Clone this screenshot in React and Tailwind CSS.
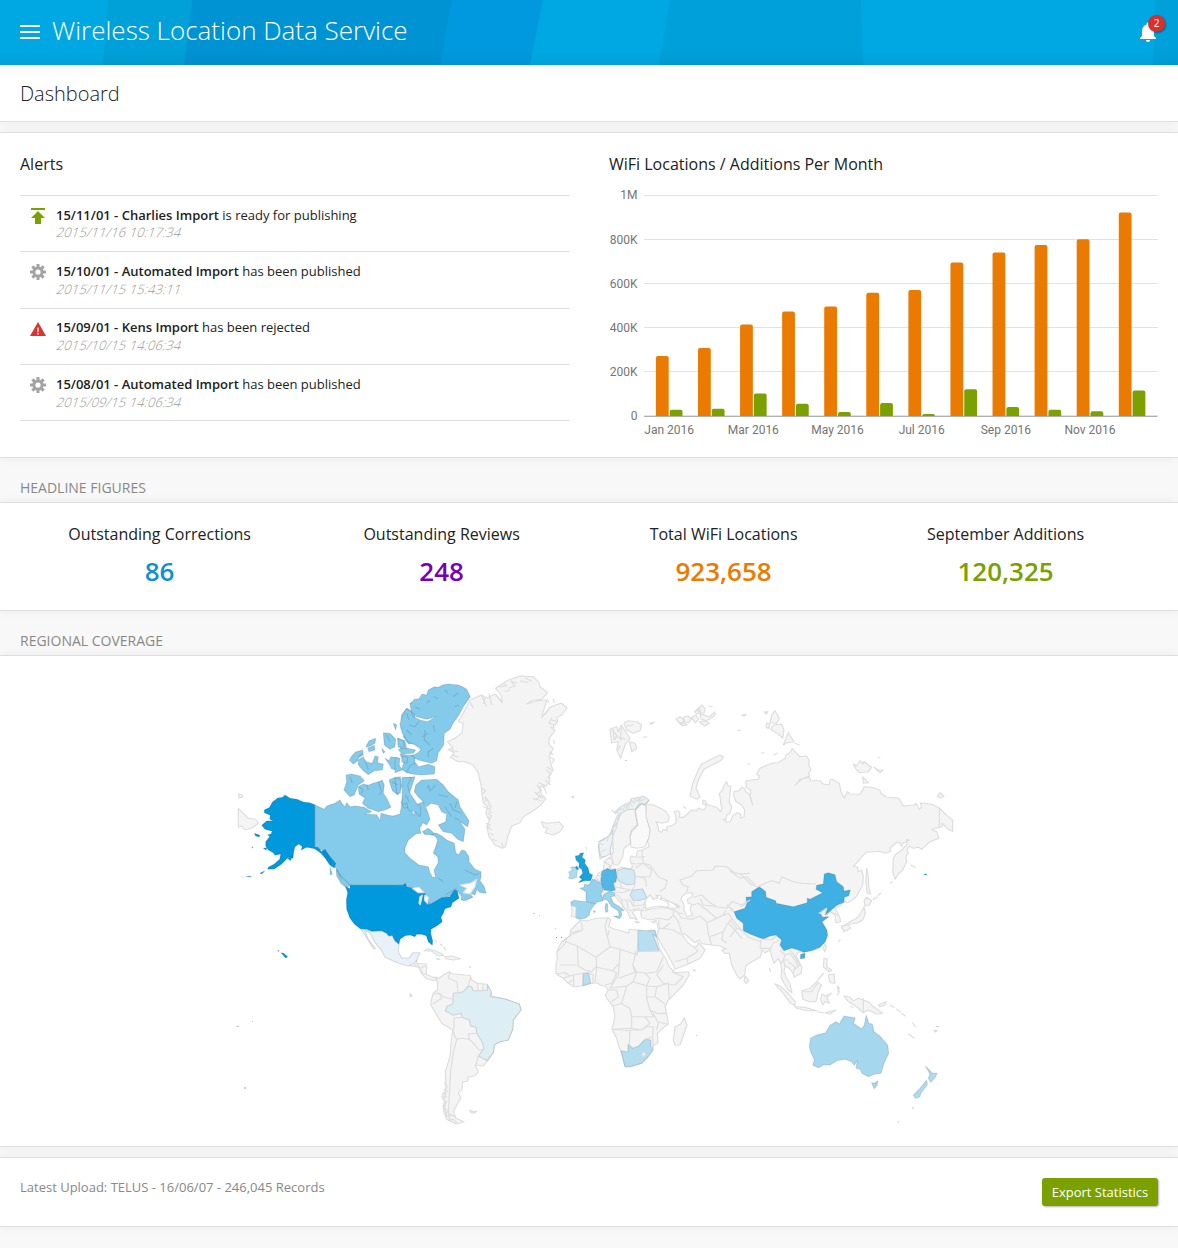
import React from "react";

/* ---------- Regional coverage map ---------- */

// Tiles of the map grid; outlines are stored in thirds of a pixel from a tile's corner.
const A = [235, 670];
const B = [395, 670];
const C = [550, 670];
const D = [740, 690];
const E = [550, 850];
const F = [730, 860];
const G = [400, 930];

function points(tile, text) {
  return text.trim().split(/\s+/).map((p) => {
    const [x, y] = p.split(",").map(Number);
    return (tile[0] + x / 3).toFixed(1) + "," + (tile[1] + y / 3).toFixed(1);
  });
}
function outline(...parts) {
  let all = [];
  for (let i = 0; i < parts.length; i += 2) all = all.concat(points(parts[i], parts[i + 1]));
  return "M" + all.join("L") + "Z";
}
// several outlines in one tile, split by "|"
function many(tile, text) {
  return text.split("|").map((t) => outline(tile, t)).join("");
}
function lines(tile, text) {
  return text.split("|").map((t) => "M" + points(tile, t).join("L")).join("");
}

const LAND = "#f4f4f4";

const shapes = [
  // Eurasia
  [LAND, outline(
    C, "288,402 310,405 335,416 348,425 358,440 355,455 335,460 318,455 325,470 325,482 335,487 340,478 352,482 350,470 368,466 378,458 378,440 372,425 385,422 390,430 388,442 400,442 412,432 425,420 440,421 445,414 462,420 470,408 458,400 458,390 466,393 470,402 485,408 500,412 512,425 516,415 512,400 510,380 508,370 518,360 522,345 530,335 534,348 543,348 540,370 538,395 545,412 540,428 530,436 528,448 520,448 530,457 540,455 550,435 562,428 572,432 572,445 582,440 584,420 575,405 558,395 552,380 552,365 568,362 575,352 582,355 588,365 600,375",
    D, "38,345 30,320 32,300 18,292 18,272 55,268 58,258 50,252 60,235 75,228 95,220 115,218 135,205 138,195 148,190 157,176 170,190 180,200 200,198 208,212 206,225 213,240 205,250 210,258 190,265 170,280 165,286 180,268 208,262 212,272 240,272 250,282 268,285 270,270 276,268 298,280 303,305 313,325 322,305 330,312 360,313 368,300 372,290 395,292 420,300 422,310 440,322 475,324 483,335 490,348 522,345 528,340 538,358 545,350 541,339 575,343 598,354 630,385 638,390 638,424 625,418 615,408 606,400 606,410 575,418 590,425 597,445 570,455 545,478 535,472 520,475 508,468 502,478 505,490 497,500 500,515 488,540 475,552 465,568 458,545 460,505 468,492 485,480 500,465 500,448 508,450 485,462 486,470 478,457 470,457 450,475 452,484 435,490 420,484 378,487 340,530 352,530 355,545 365,540 370,560 368,585 350,618 335,632 322,638 312,634 300,648 285,655 290,662 300,685 302,695 288,698 285,675 276,668",
    F, "300,155 277,185 290,210 280,250 222,277 205,275 198,288 215,320 214,340 192,352 190,340 178,325 165,318 162,335 168,350 180,372 186,398 175,390 162,370 153,352 155,330 152,310 145,295 132,310 125,290 120,270 105,278 95,270 92,290 65,305 47,318 44,345 30,357 20,345 5,315",
    E, "540,320 538,310 525,310 515,300 528,296 510,288 485,285 455,281 448,270 435,278 425,270 408,255 400,250 398,258 408,272 425,288 440,290 445,278 465,300 460,310 450,325 420,340 375,358 370,345 350,310 330,275 320,255 328,235 326,215 328,205 300,210 275,203 272,190 275,182 300,178 340,172 372,175 390,170 340,145 290,150 285,170 272,182 255,180 248,188 262,210 250,205 240,205 235,190 228,180 213,160 200,145 190,130 160,145 128,100",
    C, "128,632 138,625 145,610 160,602 163,575 178,562 190,572 180,596 200,598 215,592 240,597 248,590 240,570 243,558 258,562 262,543 275,540 298,530 290,505 300,480 285,440")],
  [LAND, outline(C, "150,568 145,530 150,512 178,498 190,470 205,440 230,408 270,385 297,392 285,405 275,402 265,408 255,425 262,465 245,480 240,500 242,520 222,535 218,560 205,585 192,585 185,562 180,548")],
  ["#f9f9f9", outline(C, "243,532 240,500 245,485 264,465 256,425 258,418 275,402 288,408 288,440 300,480 296,505 285,530 262,535")],
  ["#eaf3f6", outline(C, "152,560 148,540 146,515 160,510 185,490 188,470 205,430 195,425 215,408 240,395 245,385 270,382 280,378 297,390 285,402 270,400 255,418 235,418 212,430 200,462 188,475 188,510 180,540 182,550 165,560")],
  // Africa
  [LAND, outline(E, "92,210 110,212 140,205 175,203 182,210 176,230 195,238 215,242 235,250 238,238 262,240 290,245 300,240 315,242 330,300 345,322 358,350 375,368 415,365 418,375 400,405 375,430 355,450 345,470 350,490 355,522 338,535 322,550 324,578 308,588 308,600 290,625 275,640 240,650 225,650 213,605 205,585 200,565 186,538 195,500 190,470 170,445 166,435 175,420 165,408 150,405 140,398 118,402 98,408 72,410 55,400 40,385 18,372 18,345 22,325 20,305 35,275 60,258 62,240")],
  [LAND, many(E, "403,503 411,525 404,545 390,585 375,586 370,570 375,530 392,522|254,214 270,217 262,219|305,215 320,210 312,219|430,359 436,361 432,363")],
  // South and Central America
  [LAND, outline(G, "118,145 130,135 148,125 158,132 165,132 195,135 210,136 215,150 232,160 262,163 272,185 275,198 305,205 330,212 358,222 363,240 340,270 338,298 325,330 300,335 283,345 280,368 262,392 250,408 226,405 235,425 225,438 205,440 203,454 188,455 186,478 175,488 182,505 170,525 160,545 168,565 192,575 168,582 140,568 130,540 136,520 126,500 138,475 136,425 150,380 154,330 158,300 125,280 105,245 92,225 95,205 100,190 112,180 113,160 108,145")],
  [LAND, many(G, "38,92 50,90 50,100 78,102 80,112 78,132 98,142 112,142 104,152 82,148 66,132 56,112 32,108 30,100|72,62 85,56 105,62 125,72 132,78 112,76 96,64|135,80 155,78 182,86 160,90 138,86|110,86 120,88 112,89|210,540 218,545 230,544 222,550 212,548|30,190 36,198 31,200|208,110 212,110 210,113|105,30 110,36|120,42 126,46|132,52 138,60")],
  ["#deeef5", outline(G, "262,165 275,185 270,200 305,205 330,212 358,222 363,240 340,270 338,298 325,330 300,335 283,345 280,368 262,392 248,385 235,378 252,355 246,335 230,310 228,292 212,288 208,270 185,262 184,250 160,256 136,242 142,228 158,222 160,190 175,188 190,185 205,168 215,170 220,182 245,182 262,180")],
  ["#e9f2f8", outline(A, "376,776 410,784 440,782 455,790 462,798 472,796 480,812 492,822 490,845 500,864 522,864 533,848 555,848 548,865 540,878 520,888 490,880 450,862 440,842 420,818 405,788 390,782 400,808 422,836 415,836 396,805 380,782")],
  // North Atlantic
  [LAND, outline(B, "157,215 180,205 200,190 205,160 190,155 205,130 225,90 260,75 275,85 300,72 322,98 318,75 302,55 340,30 375,18 415,20 432,38 435,50 458,68 440,88 410,92 395,102 430,92 455,90 440,142 465,112 490,102 500,100 516,114 500,135 486,142 488,155 470,175 480,182 462,205 462,225 475,235 462,260 470,290 475,300 462,318 465,335 450,350 432,350 440,375 452,385 438,405 410,425 385,440 375,458 350,468 344,485 338,500 332,530 322,535 300,525 282,500 275,470 285,450 272,430 278,410 265,400 262,380 258,345 250,310 235,285 210,275 190,275 165,262 178,250 160,238 175,235")],
  [LAND, many(B, "440,455 455,460 475,458 492,455 505,470 495,485 475,495 450,488 458,475 445,472")],
  // Arctic archipelagos
  [LAND, many(C, "180,178 200,170 205,185 214,165 230,190 240,205 225,225 212,265 200,240 205,215 185,218 182,195|222,160 235,152 262,155 275,165 270,182 250,190 230,180|238,215 255,220 260,235 245,245|420,378 428,340 445,300 455,282 490,265 510,255 520,260 515,270 480,288 462,298 445,330 438,355 450,380 440,388|378,148 390,140 402,150 395,162 385,155|400,142 414,138 424,148 416,158 404,156|388,160 400,158 412,165 398,168|424,142 438,135 446,148 436,158|434,124 448,116 452,128 440,132|440,120 455,105 465,115 462,130 452,128|450,132 464,136 478,140 494,126 496,134 482,146 466,152 452,146|448,156 466,152 478,160 464,168|300,160 312,156 304,163|280,202 290,200|576,136 588,133 582,138|562,180 572,182|65,380 72,379|400,410 408,415|476,108 486,110")],
  [LAND, many(D, "95,75 105,62 118,85 110,100 90,98|92,118 100,105 125,102 132,120 128,145 115,132|130,165 145,128 162,155 140,158|72,65 84,65 78,72|80,98 90,102 86,116 78,110|6,75 18,74|165,160 178,165|340,222 350,228 360,212 370,222 372,215 395,232 385,245 360,248 348,238|402,232 415,240 430,240 420,248|368,260 385,278 370,280|592,318 600,308 612,318 600,324|415,203 420,202|65,190 72,188|102,195 112,190|22,222 30,222|380,535 385,560 386,590 392,612 382,610 377,575|512,525 525,532|400,628 412,620|415,616 422,610|452,580 456,576")],
  [LAND, many(D, "380,622 395,632 388,645 375,648 372,632|372,650 376,670 368,690 350,700 330,702 308,718 305,710 330,695 350,685 362,670")],
  [LAND, many(A, "10,415 40,445 62,448 70,460 50,475 30,480 20,468 10,472|10,372 20,374 24,380 12,384")],
  // East Asian and Pacific islands
  [LAND, many(F, "285,252 290,262 284,275 280,265|282,295 292,297 290,320 305,330 298,335 280,320|295,345 312,342 315,370 300,368|262,362 280,340|135,372 150,378 175,400 195,425 195,437 180,428 160,400|195,440 225,442 260,452 230,452 200,445|215,392 240,385 260,365 275,375 265,395 258,425 240,425 218,418|275,402 285,408 305,400 290,412 298,430 285,425 278,435 272,420|262,455 280,458|285,458 318,450 300,462|322,378 328,384 325,396|342,408 360,412 370,422 385,415 415,425 430,440 458,460 440,462 415,450 400,458 380,440 355,425|445,435 468,425 465,435 450,440|480,435 492,442|500,448 512,455|515,460 526,468|536,522 552,534|612,510 622,512 615,516|548,488 556,500|45,348 56,362 48,370 42,362|118,325 122,335|335,198 355,195 362,205 342,215|322,405 328,395|360,440 370,442|325,245 330,240")],
  // Canada
  ["#84cbeb", outline(
    A, "239,404 268,418 275,408 300,400 315,390 322,402 330,410 335,398 345,410 362,408 388,412 410,425 390,432 425,434 435,452 438,430 460,436 475,438 495,432 500,405 520,400",
    B, "48,405 50,424 58,436 62,405 85,395 98,425 105,448 95,465 84,458 74,475 78,490 62,492 40,510 30,535 30,548 45,565 72,585 100,590 105,608 112,622 122,622 117,600 130,578 128,560 115,550 122,530 128,510 120,498 100,492 125,490 140,498 155,510 178,520 182,548 190,555 200,540 210,542 222,560 222,575 240,598 258,605 258,622 255,632 268,650 273,670 255,668 246,658 240,675 222,668 234,682 210,692 198,690 200,680 186,660 165,678 140,684 103,704 98,688 90,672 55,654 28,645 0,646",
    A, "345,646 325,632 312,612 300,590 284,560 262,540 239,536")],
  ["#84cbeb", many(A, "333,315 350,312 375,318 388,332 370,345 358,375 345,380 327,360 335,335|370,350 385,342 400,346 415,340 430,335 442,330 448,345 445,370 455,385 468,412 450,420 430,425 400,415 382,400 390,385 372,372|343,270 350,258 362,246 383,240 385,255 372,262 368,272 355,282|392,232 402,212 422,205 420,220 405,228|398,234 418,226 420,240 402,245|370,270 385,260 392,275 412,280 420,258 430,260 428,278 445,282 442,300 418,302 400,314 385,302 370,285|445,188 465,190 482,208 480,230 465,238 448,225|488,205 510,212 516,240 502,245 490,225|450,265 462,272 468,260 490,264 494,302 470,297 462,282|475,160 485,165 482,180|462,330 480,322 496,320 500,350 488,375 472,362|503,325 540,320 530,350 520,380 525,410 508,415 498,400 505,375|495,252 520,256 540,255 540,310 515,308 500,298 506,278|515,115 540,130 540,220 520,222 505,200 512,180 498,160 500,135|525,100 540,92 540,130|440,235 450,245 445,250|285,592 292,612 286,615|304,598 322,622 345,645 335,655 318,640 305,618")],
  ["#84cbeb", many(B, "45,105 58,88 72,86 82,72 95,75 100,60 118,50 130,52 145,44 160,42 190,45 205,52 215,58 226,80 205,110 190,138 175,158 165,178 148,190 146,225 130,248 125,272 110,280 70,270 50,258 70,248 78,238 60,225 40,215 22,190 15,165 22,135 35,115 48,125 55,140 75,150 98,155 122,140 95,148 65,140 50,125|8,205 25,212 28,230 10,232|10,238 38,235 62,240 55,250 20,252|0,262 15,265 12,285 22,300 0,308|22,258 38,262 36,280 20,276|45,288 62,278 70,290 100,283 120,290 118,312 80,315 50,312 35,305|22,322 50,322 38,345 42,365 65,400 78,412 75,440 60,425 40,420 35,398 22,405|0,325 18,328 16,370 5,370|62,345 80,330 125,328 145,345 160,365 190,390 195,410 222,452 218,470 195,455 210,478 205,515 188,508 170,490 145,485 130,465 152,455 155,432 140,425 130,405 108,400 95,410 85,395 70,380 58,365|82,485 100,475 120,492 90,494|180,445 192,450")],
  // United States
  ["#0099dd", outline(A, "239,404 224,398 205,396 186,388 165,385 150,375 143,382 128,384 112,397 104,412 88,420 88,428 106,436 104,448 115,452 95,453 80,466 90,478 112,484 108,492 98,494 104,500 92,515 92,528 100,540 115,548 120,556 137,552 134,568 118,582 100,592 98,598 118,597 140,582 160,562 174,565 176,545 180,530 192,522 202,530 198,540 215,532 239,536 258,550 272,566 284,585 298,594 302,580 285,560 270,538 260,545 248,532 239,532")],
  ["#0099dd", outline(A, "345,646 505,646 510,640 516,650", B, "62,656 90,670 98,690 103,704 120,695 140,683 165,680 178,660 187,662 192,685 172,698 168,710 150,716 145,730 138,742 142,755 125,768 108,778 107,790 113,812 112,826 100,815 94,797 80,793 65,793 60,800 45,795 30,797 15,808 12,822", A, "480,812 472,796 462,798 455,790 440,782 410,784 395,778 376,776 358,762 345,745 335,718 334,690 338,668 332,650 345,656")],
  ["#0099dd", many(A, "58,490 75,496 72,501 62,498|50,531 54,531 52,534|85,535 95,533 94,541|75,610 90,602 80,612|20,621 26,622|32,620 44,618 50,620|128,841 132,842 130,845|138,848 146,850 158,860 152,864|158,565 172,558 166,572")],
  // Asia and Oceania
  ["#3eb0e3", outline(F, "88,80 107,95 108,112 137,122 138,130 190,140 232,128 232,115 240,118 278,98 258,88 260,76 280,72 283,42 295,38 315,44 320,65 340,80 342,93 361,90 356,107 343,112 342,127 320,136 298,155 285,165 292,148 270,160 278,172 297,170 275,185 290,210 293,225 286,245 270,262 245,272 222,277 205,270 185,264 162,272 150,255 155,240 138,225 120,228 100,237 85,232 60,222 40,212 40,190 20,175 12,155 45,145 50,132 48,112 65,110 65,95")],
  ["#3eb0e3", many(F, "212,283 225,280 224,295 211,296|583,42 590,42 590,45 583,45")],
  ["#a5d8ee", many(F, "409,466 416,490 427,492 432,515 450,528 473,555 476,580 462,610 453,640 435,642 415,650 396,640 390,628 378,625 382,602 372,616 365,605 345,598 320,602 300,615 280,615 266,623 248,616 253,600 242,575 238,560 242,535 262,524 287,518 300,496 318,485 328,492 342,468 376,474 370,490 395,507 403,495|425,668 434,670 443,662 442,675 433,686")],
  ["#b0dcf1", many(F, "586,618 598,630 607,640 621,640 616,652 602,667 595,655 600,642|590,660 592,675 572,700 570,710 556,715 550,706 570,685|547,743 551,743 549,746|503,785 506,785 505,788")],
  // Europe and Africa
  ["#1aa2de", many(C, "76,558 88,556 90,550 101,548 96,562 106,570 104,580 115,595 118,610 128,615 122,632 105,632 85,638 96,628 88,622 98,610 95,598 86,592 88,580 78,570|74,595 80,588 87,598 78,600|108,532 111,540")],
  ["#afdbef", many(C, "74,590 62,592 68,600 56,606 60,615 56,625 66,627 80,622 82,600")],
  ["#93d1ed", many(C, "128,627 160,643 158,662 152,672 160,692 140,697 136,702 108,694 108,665 90,655 103,652 102,643 116,645")],
  ["#9bd5ee", many(C, "62,697 72,691 108,695 135,702 120,722 118,735 105,745 88,748 76,742 78,712 64,708|130,722 137,724 133,728")],
  ["#9bd5ee", many(C, "160,675 178,664 194,668 194,678 182,680 190,698 215,715 223,722 212,722 216,735 208,746 190,738 208,738 205,722 185,710 172,690 160,688|168,700 173,702 173,725 167,727 165,710")],
  [LAND, many(C, "64,708 78,712 76,740 64,740 66,722")],
  ["#52b6e6", many(C, "158,602 168,598 172,595 182,600 197,597 200,620 198,635 190,640 196,660 185,663 162,660 152,632 154,612")],
  ["#d3e9f3", many(C, "202,602 222,595 252,600 256,618 254,642 232,645 205,632 200,615")],
  ["#cfe6f4", many(C, "248,660 278,657 290,683 282,688 265,692 248,690 240,675")],
  ["#b7dff1", outline(E, "263,240 300,243 314,240 320,262 308,252 328,303 264,304")],
  ["#b9def0", outline(E, "99,370 116,370 122,400 98,407")],
  ["#b4def0", outline(E, "213,602 234,606 234,583 248,595 266,588 285,568 302,570 303,590 310,600 290,625 275,640 240,650 225,650")],
  [LAND, outline(E, "275,612 283,606 288,613 278,620")],
];

// Seas and lakes inside a land outline
const water = [
  outline(E, "285,160 288,148 300,134 310,148 325,143 318,136 335,138 330,148 350,155 358,166 350,172 330,168 305,172 288,178"),
  outline(E, "395,140 410,128 428,130 425,142 412,148 415,160 425,163 420,180 428,196 410,200 402,180 402,165 393,148"),
  many(B, "52,655 72,652 88,668 70,668|75,680 82,676 76,704 72,700|90,675 100,682 98,702 88,690|195,645 230,638 245,628 240,650 225,672 205,668 215,655"),
  many(D, "238,670 260,655 255,668"),
];

const borders = [
  // Asia
  lines(D, "0,550 35,585 55,590 75,580 95,572 118,580 125,560 160,575 185,580 228,582|598,354 598,412|0,650 20,640"),
  lines(E, "600,70 570,72 550,65 530,50 495,48 490,60 440,62 425,78 390,90 398,105 415,110 410,125|430,142 455,135 475,155 500,170 530,175 545,155 575,165 600,150|428,165 445,160 470,180 500,205|528,180 520,195 500,205 470,218 475,250 485,285|500,205 535,190 545,205 530,225 520,245 480,260|385,190 395,205 425,208 450,198 470,215|330,205 355,210 370,195 372,178|370,195 385,215 395,250|340,172 372,180 385,188 400,192|328,235 340,235 360,220|340,235 370,240 395,255|375,335 410,325 435,310 445,300|410,325 415,342|430,288 440,300|545,205 565,230 580,245|535,220 555,240 575,265|530,280 515,268 520,248|450,145 460,165 500,170|320,215 326,240|550,180 530,165"),
  lines(F, "0,32 30,55 50,50 75,75|0,150 12,155|0,180 20,205 40,212|40,215 55,232 92,245 95,235|100,238 125,240 140,228|92,245 90,265 120,265|120,270 128,250 150,240|150,270 165,285 160,300 152,310|165,285 180,280 195,300 205,320 190,330|180,270 195,290 210,318|175,305 195,320 190,340|165,318 160,300 175,300|400,415 400,458|218,395 245,395 262,370|305,158 325,165|20,205 0,230"),
  // Europe
  lines(C, "275,540 280,580 258,582 245,580|262,562 285,560|255,595 280,580 305,600 300,620 260,620|280,580 300,585 325,620 352,632 345,655 328,665|256,618 285,625 290,650|256,645 245,660 215,655 210,635|215,655 195,650|195,665 215,668 240,660|200,672 215,690 240,690 250,710|215,690 218,710 228,718|230,690 235,720|250,692 252,708 280,705 288,690|238,722 255,718 270,715|138,625 150,635|140,615 155,620|350,692 385,705|370,700 388,715|163,575 178,585 178,595|205,435 200,470 188,500 190,545 183,560|185,420 195,430 205,425|210,415 220,420 225,405 232,415 238,398 248,410|195,432 212,418 206,412|222,402 236,408 244,392|240,388 252,398 258,386|264,380 268,396 284,386|185,480 198,460|165,505 175,500 172,515|150,520 160,525|155,545 168,538|255,385 262,395 275,382|185,180 200,195 195,210|200,200 228,208|210,225 205,240|190,178 192,210|214,170 212,212|230,168 250,165"),
  // Africa
  lines(E, "92,212 98,240 62,255 35,278|48,262 48,278 22,305|48,275 82,288 85,345 30,345|82,288 138,322 180,290 172,260 165,230 172,205|172,260 178,240|180,290 210,298 262,315 263,240|210,298 208,340 188,362 140,352 138,322|138,350 125,365 105,360 85,348|125,365 98,370 70,375 72,408|18,372 45,368 60,378 70,375|40,385 60,378|55,400 68,390|116,370 130,375 128,398|140,352 135,398|188,362 200,370 185,400 165,405|208,340 205,375 180,415 200,412|256,315 248,345 260,365 205,385|264,304 335,302|256,315 256,304|248,345 255,365 290,370 320,365 340,320|340,345 320,375 340,400 375,405 400,380 365,365|260,365 250,395 290,408 300,385 285,370|200,412 230,408 250,395|290,408 320,410 355,400 358,448|230,408 215,460 190,468|175,420 200,420 205,440 185,455|290,410 290,445 300,480 310,500 280,500 245,500 240,475 215,462|320,410 315,440 290,442|315,440 345,462|300,480 322,490 352,490|310,490 325,520 320,540|245,500 245,535 188,538|245,535 275,540 300,520 285,500|275,540 240,540 238,585|275,540 290,530 310,530 308,560 285,568|308,560 310,595|322,515 352,522|188,538 240,542|60,248 98,240"),
  // South and Central America
  lines(G, "150,125 145,145 170,155 175,188|212,140 205,168|232,160 235,182|250,162 248,182|112,188 130,200 158,208|100,192 120,190 125,205 98,222|185,262 162,265 162,300|158,300 165,320 170,328 185,325 208,328|170,328 160,370 152,420 148,500 145,550 165,560|208,328 205,312 230,310|208,328 225,345 235,358 248,360|235,378 228,405|50,100 60,115 78,108|62,118 68,132 80,132|40,100 50,110|135,555 145,540 150,570|128,500 140,500|128,520 138,530|133,458 142,470 134,478 145,485|126,492 138,488 130,512 140,515 128,530 140,540|132,535 140,552 136,560 150,555 146,572 160,568 170,578"),
  // Greenland
  lines(B, "260,78 275,110|282,70 290,105|302,72 322,98|270,85 265,102|225,95 235,115|340,55 360,48 350,38|330,65 345,60|375,32 400,38|312,50 335,48 325,40|345,32 365,40|390,24 410,34|448,135 465,112|470,150 488,155|465,170 480,175|462,245 475,255|455,290 470,300|452,330 466,345|430,375 445,385|270,380 285,400|265,410 285,418|275,440 285,448|275,470 290,480|458,87 460,100|475,87 478,100|472,142 462,160 478,165|476,210 478,222|466,262 478,270 470,280|454,300 468,312 458,325|430,338 448,345 436,352|425,345 440,362 425,370|418,365 435,380 420,390|412,385 440,392|445,350 455,370|262,355 272,362 262,372|265,385 278,388 268,396|278,402 288,408 282,425 292,428|278,430 290,438 280,452|272,458 285,465 278,478|285,490 296,495|292,508 305,512|320,518 325,532|166,240 190,245|170,255 190,262"),
];

const fjords = [
  lines(B, "42,165 60,170 72,155|82,200 100,190|115,165 120,185|60,110 75,118|95,100 105,90|115,80 130,85|150,60 160,70|175,80 190,68|180,110 192,105|90,180 88,210 105,225|95,350 110,360 120,345|130,375 160,380|165,400 175,420 200,430|105,365 100,345|150,410 170,440|185,395 180,415|100,262 100,245 115,235|210,600 240,615 252,610|130,625 145,635|185,655 150,675"),
  lines(A, "372,350 385,360 378,372|395,345 400,360|430,335 440,365 432,375|345,320 352,340|380,250 370,262|390,270 400,300|470,335 488,345|270,545 290,580|262,540 278,575|305,600 320,628|512,375 522,395|515,130 522,150|515,180 530,195|455,195 465,215"),
];

function CoverageMap() {
  return (
    <svg viewBox="0 656 1178 490" className="block h-[490px] w-full" role="img" aria-label="World coverage map">
      <g strokeWidth="1.15" strokeLinejoin="round">
        {shapes.map(([fill, d], i) => (
          <path key={i} d={d} fill={fill} stroke={fill === LAND ? "#dddddd" : "rgba(0,0,0,0.12)"} />
        ))}
        {water.map((d, i) => <path key={i} d={d} fill="#fff" stroke="#ddd" />)}
        {borders.map((d, i) => <path key={i} d={d} fill="none" stroke="#ddd" />)}
        {fjords.map((d, i) => <path key={i} d={d} fill="none" stroke="rgba(0,0,0,0.12)" />)}
      </g>
      <path fill="#ccc" d="M533 913h2v1h-2zM539 915h1v1h-1zM555 928h1v1h-1zM696 1035h1v1h-1zM252 1021h1v1h-1zM236 1026h3v1h-3zM244 1087h2v2h-2zM936 1026h3v1h-3zM572 797h2v1h-2zM625 760h2v1h-2z" />
      <path d="M556 937h1v1h-1zM561 937h1v1h-1z" fill="#3a9ac8" />
    </svg>
  );
}

/* ---------- Monthly chart ---------- */

const bars = [
  [356, 409.7], [348, 408.8], [324.4, 393.4], [311.4, 403.8], [306.4, 412], [292.8, 403.1],
  [290, 414], [262.4, 389.3], [252.4, 407], [245, 409.7], [239.3, 411.2], [212.4, 390.4],
];
const ticks = [["1M", 195], ["800K", 239], ["600K", 283], ["400K", 327], ["200K", 371], ["0", 415]];
const months = ["Jan 2016", "Mar 2016", "May 2016", "Jul 2016", "Sep 2016", "Nov 2016"];

function bar(x, top) {
  const r = Math.min(2, 416 - top);
  return `M${x} 416V${top + r}q0 ${-r} ${r} ${-r}h${12.8 - 2 * r}q${r} 0 ${r} ${r}V416z`;
}

function Chart() {
  return (
    <svg viewBox="609 180 549 262" className="block h-[262px] w-[549px]" fontFamily="Roboto, sans-serif" fontSize="12" fill="#757575">
      {ticks.map(([label, y], i) => (
        <g key={label}>
          <rect x="644" y={y} width="513.5" height="1" fill="#e2e2e2" />
          <text x="637.5" y={i === 0 ? 199 : y + 5} textAnchor="end">{label}</text>
        </g>
      ))}
      {bars.map(([a, b], i) => (
        <g key={i}>
          <path d={bar(655.9 + i * 42.08, a)} fill="#eb7a00" />
          <path d={bar(669.7 + i * 42.08, b)} fill="#7aa100" />
        </g>
      ))}
      <rect x="644" y="416" width="513.5" height="1" fill="#b0b0b0" />
      {months.map((m, i) => (
        <text key={m} x={669.2 + i * 84.16} y="434" textAnchor="middle">{m}</text>
      ))}
    </svg>
  );
}

/* ---------- Icons ---------- */

function PublishIcon() {
  return (
    <svg width="24" height="24" viewBox="0 0 24 24" fill="#7aa100">
      <path d="M5 4v2h14V4H5zm0 10h4v6h6v-6h4l-7-7-7 7z" />
    </svg>
  );
}
function GearIcon() {
  return (
    <svg width="24" height="24" viewBox="-12 -12 24 24">
      <g fill="#a3a3a3">
        {[0, 45, 90, 135].map((a) => <rect key={a} x="-1.5" y="-8" width="3" height="16" transform={`rotate(${a})`} />)}
        <circle r="5.6" />
      </g>
      <circle r="2.6" fill="#fff" />
    </svg>
  );
}
function WarningIcon() {
  return (
    <svg width="24" height="24" viewBox="0 0 24 24">
      <path d="M12 5L4 19h16z" fill="#d9342f" />
      <path d="M11.2 10.5h1.6v4.2h-1.6zM11.2 15.8h1.6v1.6h-1.6z" fill="#fff" opacity=".8" />
    </svg>
  );
}

const alerts = [
  [<PublishIcon />, "15/11/01 - Charlies Import", "is ready for publishing", "2015/11/16 10:17:34", "h-14", "pt-[3px]"],
  [<GearIcon />, "15/10/01 - Automated Import", "has been published", "2015/11/15 15:43:11", "h-[57px]", "pt-[3px] gap-px"],
  [<WarningIcon />, "15/09/01 - Kens Import", "has been rejected", "2015/10/15 14:06:34", "h-14", "pt-[2px] gap-px"],
  [<GearIcon />, "15/08/01 - Automated Import", "has been published", "2015/09/15 14:06:34", "h-14", "pt-[3px] gap-px"],
];

const figures = [
  ["Outstanding Corrections", "86", "text-[#0e90d2]"],
  ["Outstanding Reviews", "248", "text-[#7a00b8]"],
  ["Total WiFi Locations", "923,658", "text-[#eb7a00]"],
  ["September Additions", "120,325", "text-[#7aa100]"],
];

const panel = "border-y border-[#dedede] bg-white shadow-[0_0_10px_rgba(0,0,0,0.06)]";

export default function App() {
  return (
    <div className="min-h-[1248px] w-full overflow-hidden bg-[#f8f8f8] font-['Open_Sans',sans-serif] text-[#222]">
      <header className="relative flex h-[65px] items-center bg-[#00a8e3] px-5">
        <svg className="absolute inset-0 h-full w-full" viewBox="0 0 1178 65" preserveAspectRatio="none">
          <path d="M108 0H192L184 65H103z" fill="#00a0d9" />
          <path d="M192 0H452L441 65H184z" fill="#0093d4" />
          <path d="M452 0H543L530 65H441z" fill="#0099df" />
          <path d="M670 0H860.5L863.5 65H659z" fill="#00a0da" />
          <path d="M1155 0H1178V65H1153z" fill="#00a0da" />
          <defs>
            <linearGradient id="shade" x1="0" y1="0" x2="0" y2="1">
              <stop offset=".75" stopColor="#000" stopOpacity="0" />
              <stop offset="1" stopColor="#000" stopOpacity=".04" />
            </linearGradient>
          </defs>
          <rect width="1178" height="65" fill="url(#shade)" />
        </svg>
        <div className="relative mb-px flex w-5 flex-col gap-1">
          <i className="h-0.5 bg-white" />
          <i className="h-0.5 bg-white" />
          <i className="h-0.5 bg-white" />
        </div>
        <h1 className="relative mb-1.5 ml-3 text-[26px] leading-9 font-light text-white">Wireless Location Data Service</h1>
        <div className="relative mr-[-2px] mb-0.5 ml-auto h-6 w-6">
          <svg className="h-6 w-6" viewBox="0 0 24 24" fill="#fff">
            <path d="M12 22c1.1 0 2-.9 2-2h-4c0 1.100.89 2 2 2zm6-6v-5c0-3.070-1.640-5.640-4.500-6.320V4c0-.83-.67-1.500-1.500-1.500s-1.500.67-1.500 1.500v.68C7.630 5.360 6 7.920 6 11v5l-2 2v1h16v-1l-2-2z" />
          </svg>
          <span className="absolute -top-[5px] left-3 flex h-[17px] w-[17px] items-center justify-center rounded-full bg-[#d9302e] text-[10px] text-white shadow-[1px_1px_2px_rgba(0,0,0,0.4)]">2</span>
        </div>
      </header>

      <div className="h-[57px] border-b border-[#dedede] bg-white px-5 pt-[13px] text-[20px] leading-8 font-light shadow-[0_0_10px_rgba(0,0,0,0.06)]">Dashboard</div>

      <section className={`mt-[10px] flex h-[326px] justify-between px-5 ${panel}`}>
        <div className="w-[549px] pt-[19px]">
          <h2 className="text-[16px] leading-6">Alerts</h2>
          <ul className="mt-[19px] border-t border-[#dedede]">
            {alerts.map(([icon, name, state, time, height, spacing]) => (
              <li key={name} className={`flex border-b border-[#dedede] pt-2 pl-[6px] text-[13px] ${height}`}>
                {icon}
                <div className={`flex flex-col pl-[6px] leading-[17px] ${spacing}`}>
                  <p><span className="font-semibold">{name}</span> {state}</p>
                  <p className="w-fit -skew-x-[18deg] pl-px font-light tracking-[0.12px] text-[#999]">{time}</p>
                </div>
              </li>
            ))}
          </ul>
        </div>
        <div className="w-[549px] pt-[19px]">
          <h2 className="text-[16px] leading-6">WiFi Locations / Additions Per Month</h2>
          <div className="mt-1"><Chart /></div>
        </div>
      </section>

      <h3 className="h-11 px-5 pt-5 text-[14px] leading-5 text-[#888]">HEADLINE FIGURES</h3>
      <section className={`grid h-[109px] grid-cols-[repeat(4,282px)] px-[18.6px] pt-[19px] ${panel}`}>
        {figures.map(([label, value, color]) => (
          <div key={label} className="text-center">
            <p className="text-[16px] leading-6">{label}</p>
            <p className={`mt-2 text-[26px] leading-[34px] font-semibold ${color}`}>{value}</p>
          </div>
        ))}
      </section>

      <h3 className="h-11 px-5 pt-5 text-[14px] leading-5 text-[#888]">REGIONAL COVERAGE</h3>
      <section className={`h-[492px] ${panel}`}><CoverageMap /></section>

      <section className={`mt-[10px] flex h-[70px] items-start justify-between px-5 ${panel}`}>
        <p className="pt-5 text-[13px] leading-[18px] text-[#888]">Latest Upload: TELUS - 16/06/07 - 246,045 Records</p>
        <button className="mt-5 h-7 w-[116px] rounded-[3px] bg-[#7aa100] pt-px text-[13px] text-white shadow-[1px_1px_2px_rgba(0,0,0,0.3)]">Export Statistics</button>
      </section>
    </div>
  );
}
